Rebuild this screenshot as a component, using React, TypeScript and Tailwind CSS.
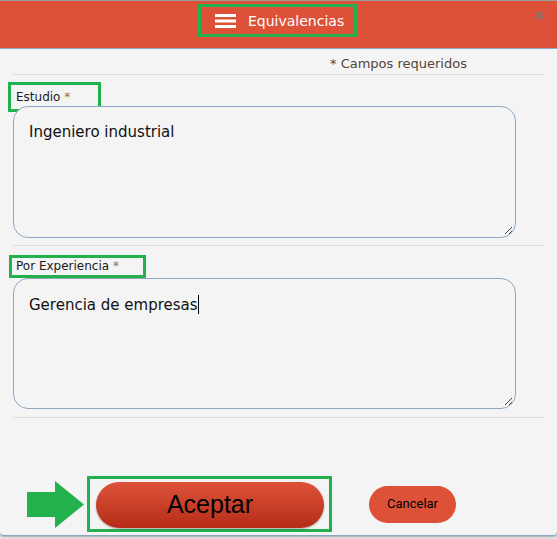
export default function App() {
  return (
    <div className="w-[557px] h-[539px] bg-[#e6e6e6] overflow-hidden font-['DejaVu_Sans',sans-serif]">
      {/* Dialog */}
      <div className="h-[536px] bg-[#f4f4f4] border-t border-[#9a9a9a] border-b border-b-[#8ea6c3] rounded-b-[4px] shadow-[0_1px_2px_rgba(0,0,0,0.25)] flex flex-col">
        {/* Header */}
        <div className="relative h-[48px] bg-[#de5139] border-b border-[#8ea6c3] pl-[198px] pt-[3px]">
          <div className="w-[159px] h-[33px] border-[3px] border-[#22b14c] flex items-center pl-[14px]">
            <svg width="21" height="14" viewBox="0 0 21 14" className="mr-[12px]">
              <rect x="0" y="0" width="21" height="3" fill="#fff" />
              <rect x="0" y="5.5" width="21" height="3" fill="#fff" />
              <rect x="0" y="11" width="21" height="3" fill="#fff" />
            </svg>
            <span className="text-white text-[14px] leading-none">Equivalencias</span>
          </div>
          <svg width="9" height="9" viewBox="0 0 9 9" className="absolute left-[535px] top-[10px]">
            <path d="M1 1 L8 8 M8 1 L1 8" stroke="#8b7272" strokeWidth="2.2" />
          </svg>
        </div>

        {/* Body */}
        <div className="pl-[13px] pr-[14px]">
          <div className="h-[25px] pl-[317px] pt-[7px] text-[13px] leading-[16px] text-[#54443a]">
            * Campos requeridos
          </div>
          <div className="h-px bg-[#dcdcdc]" />

          {/* Estudio */}
          <div className="relative mt-[15px] pl-[3px] h-[15px] text-[12px] leading-[15px] text-[#1a1a1a]">
            Estudio <span className="text-[#a0683c]">*</span>
            <div className="absolute left-[-5px] top-[-8px] w-[93px] h-[30px] border-[3px] border-[#22b14c]" />
          </div>
          <TextBox value="Ingeniero industrial" className="mt-[1px] h-[132px]" />
          <div className="mt-[7px] h-px bg-[#dcdcdc]" />

          {/* Por Experiencia */}
          <div className="relative mt-[13px] pl-[3px] h-[15px] text-[12px] leading-[15px] text-[#1a1a1a]">
            Por Experiencia <span className="text-[#a0683c]">*</span>
            <div className="absolute left-[-4px] top-[-4px] w-[137px] h-[23px] border-[3px] border-[#22b14c]" />
          </div>
          <TextBox value="Gerencia de empresas" caret className="mt-[4px] h-[131px]" />
          <div className="mt-[8px] h-px bg-[#dcdcdc]" />

          {/* Buttons */}
          <div className="mt-[58px] flex items-center pl-[14px]">
            <svg width="57" height="47" viewBox="0 0 57 47" className="mr-[3px]">
              <polygon points="0,11 28,11 28,0 57,23.5 28,47 28,36 0,36" fill="#22b14c" />
            </svg>
            <div className="border-[3px] border-[#22b14c] pl-[6px] pr-[5px] pt-[3px] pb-[1px]">
              <button className="w-[228px] h-[46px] rounded-full bg-gradient-to-b from-[#dd5239] to-[#b52b17] shadow-[0_1px_2px_rgba(0,0,0,0.3)] text-black text-[25px] font-['Liberation_Sans',sans-serif]">
                Aceptar
              </button>
            </div>
            <button className="ml-[37px] w-[87px] h-[37px] rounded-full bg-[#de5139] text-black text-[13px] font-['Roboto',sans-serif]">
              Cancelar
            </button>
          </div>
        </div>
      </div>
    </div>
  )
}

function TextBox({ value, caret, className }: { value: string; caret?: boolean; className: string }) {
  return (
    <div className={`relative w-[503px] rounded-[15px] border border-[#8ea6c3] bg-[#f4f4f4] pl-[15px] pt-[16px] text-[15px] leading-[18px] text-[#111] ${className}`}>
      {value}
      {caret && <span className="inline-block w-px h-[19px] bg-black align-[-4px]" />}
      <svg width="10" height="10" viewBox="0 0 10 10" className="absolute right-[2px] bottom-[2px]">
        <path d="M9 2 L2 9 M9 6 L6 9" stroke="#444" strokeWidth="1" />
      </svg>
    </div>
  )
}
